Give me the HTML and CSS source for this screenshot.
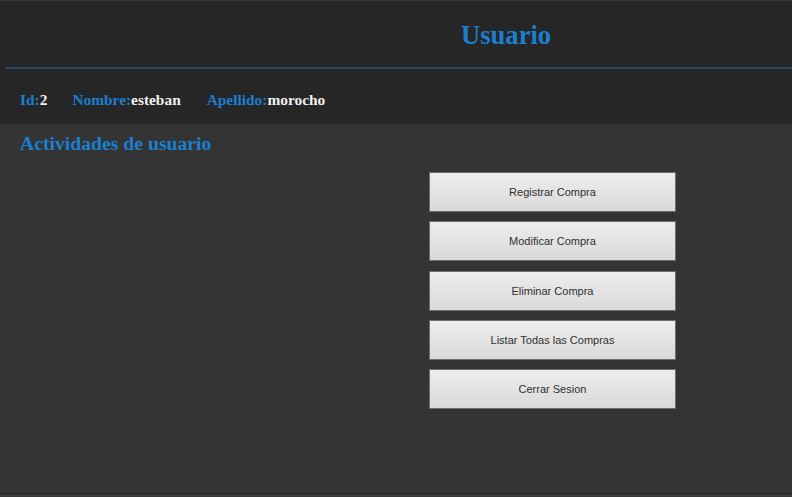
FILE: index.html
```html
<!DOCTYPE html>
<html>
<head>
<meta charset="utf-8">
<link rel="stylesheet" href="styles.css">
</head>
<body>
<div class="page">
  <header class="header">
    <div class="title-bar"><h1 class="title">Usuario</h1></div>
    <div class="info">
      <span class="field"><span class="lbl">Id:</span><span class="val">2</span></span>
      <span class="field"><span class="lbl">Nombre:</span><span class="val">esteban</span></span>
      <span class="field"><span class="lbl">Apellido:</span><span class="val">morocho</span></span>
    </div>
  </header>
  <main class="main">
    <h2 class="section">Actividades de usuario</h2>
    <div class="actions">
      <button class="btn">Registrar Compra</button>
      <button class="btn">Modificar Compra</button>
      <button class="btn">Eliminar Compra</button>
      <button class="btn">Listar Todas las Compras</button>
      <button class="btn">Cerrar Sesion</button>
    </div>
  </main>
  <div class="bottom"></div>
</div>
</body>
</html>
```
FILE: styles.css
```css
html, body { margin: 0; padding: 0; }
body { background: #343434; width: 792px; height: 497px; overflow: hidden; font-family: "Liberation Serif", serif; }
.page { display: flex; flex-direction: column; height: 497px; }
.header { background: #262626; border-top: 1px solid #3a3a3a; height: 123px; display: flex; flex-direction: column; }
.title-bar { margin-left: 5px; height: 68px; border-bottom: 2px solid #2a4664; display: flex; align-items: center; box-sizing: border-box; padding-left: 456px; }
.title { margin: 0; font-size: 26.6px; font-weight: bold; color: #1b7fd1; line-height: 30px; padding-top: 2px; }
.info { display: flex; padding-left: 20px; padding-top: 22px; font-size: 15.4px; font-weight: bold; line-height: 18px; }
.field { margin-right: 25px; }
.field:nth-child(2) { margin-right: 26px; }
.lbl { color: #1b7fd1; }
.val { color: #f0f0f0; }
.main { flex: 1; display: flex; flex-direction: column; }
.section { margin: 0; padding: 8px 0 0 20px; font-size: 19.7px; font-weight: bold; color: #1b7fd1; line-height: 22px; }
.actions { display: flex; flex-direction: column; gap: 9.25px; margin-left: 429px; margin-top: 18px; width: 247px; }
.btn { height: 40px; margin: 0; border: 1px solid #6e6e6e; background: linear-gradient(#ededed, #dadada); font-family: "Liberation Sans", Arial, sans-serif; font-size: 11px; color: #303030; padding: 0; }
.bottom { height: 3px; border-top: 1px solid #262626; background: #3a3a3a; }
```
